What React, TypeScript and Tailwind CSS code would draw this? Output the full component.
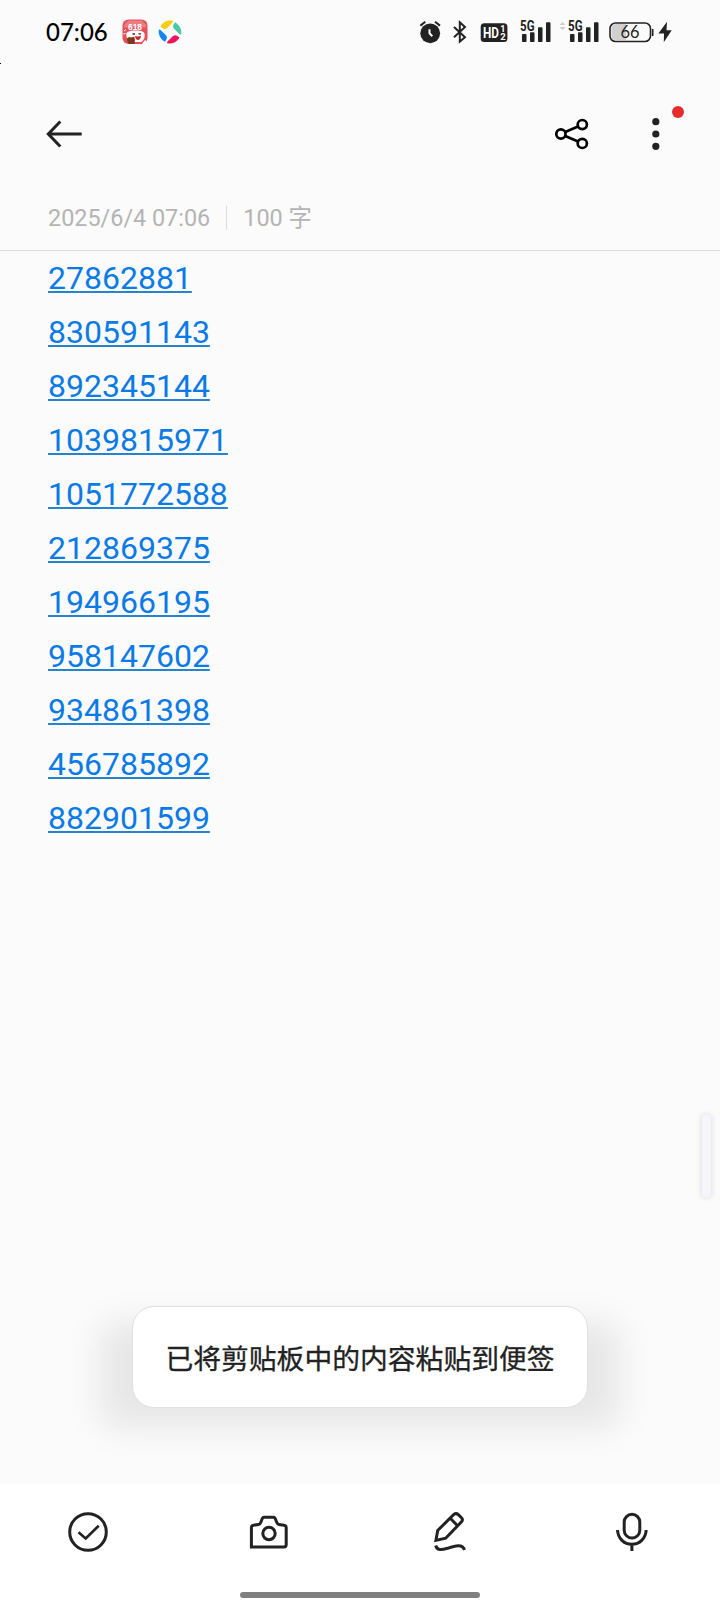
import type { ReactNode } from 'react';

interface NoteMeta {
  date: string;
  count: string;
}

const meta: NoteMeta = { date: '2025/6/4 07:06', count: '100 字' };

const numbers: string[] = [
  '27862881',
  '830591143',
  '892345144',
  '1039815971',
  '1051772588',
  '212869375',
  '194966195',
  '958147602',
  '934861398',
  '456785892',
  '882901599',
];

function SaleAppIcon() {
  return (
    <svg className="ml-[14px] w-[26px] h-[26px]" viewBox="0 0 26 26">
      <rect x="0.5" y="0.5" width="25" height="24.5" rx="6" fill="#e5505a" />
      <path d="M6 1.500h14l4 4v3H2V6z" fill="#ef7c80" />
      <text x="6" y="11" fontSize="9.5" fontWeight="700" fill="#fff" fontFamily="Liberation Sans, sans-serif" textLength="14" lengthAdjust="spacingAndGlyphs">618</text>
      <path d="M4.500 14c2-2 5-2.500 9-2.500s8 .5 9 3c.8 3-.5 6.500-3 8.500H9c-3-2-5.500-5-4.500-9z" fill="#fff" />
      <path d="M10.500 15h2.500M16.500 14.800h2.500" stroke="#4a2020" strokeWidth="1.300" />
      <path d="M13 17c2 .6 4 .6 6-.3-.2 3-1.500 4.300-3 4.300s-2.800-1.500-3-4z" fill="#c92a35" />
      <path d="M5 19.500l2-1.500 2.500.5 2.500-1 1 3-.5 4.500H7c-1.500-1-2-3.500-2-5.500z" fill="#7a3a1c" />
      <path d="M20 25l3-4 1.500 1-1 3z" fill="#fff" />
      <path d="M2 12l2-1.500M1.500 15l2-.5" stroke="#fff" />
    </svg>
  );
}

function PinwheelIcon() {
  return (
    <svg className="ml-[10px] w-[24px] h-[24px]" viewBox="0 0 24 24">
      <path d="M2.500 6.500A11.500 11.500 0 0 1 14.500.8Q15.500 1.500 14.500 2.500L9 8.300Q7 9.800 5 8.500z" fill="#f8cd12" />
      <path d="M17 2.200A11.500 11.500 0 0 1 23.200 14.300Q22.500 15 21.500 14L16 8.800Q14.500 7 15.500 4.800z" fill="#4cc8a3" />
      <path d="M21.500 17.500A11.500 11.500 0 0 1 9.500 23.200Q8.500 22.500 9.500 21.500L15 16Q17 14.500 19 15.800z" fill="#f0145f" />
      <path d="M7 21.800A11.500 11.500 0 0 1 .8 9.700Q1.500 9 2.500 10L8 15.200Q9.500 17 8.500 19.300z" fill="#1485f5" />
    </svg>
  );
}

function SignalBars() {
  return (
    <>
      <text x="1" y="11" fontSize="14.500" fontWeight="700" fill="#222" fontFamily="Roboto, sans-serif" textLength="14.500" lengthAdjust="spacingAndGlyphs">5G</text>
      <rect x="3" y="14" width="4.500" height="8" rx="0.8" fill="#222" />
      <rect x="11" y="12.300" width="4.500" height="9.700" rx="0.8" fill="#222" />
      <rect x="19" y="7.300" width="4.500" height="14.700" rx="0.8" fill="#222" />
      <rect x="27" y="2.200" width="4.500" height="19.800" rx="0.8" fill="#222" />
    </>
  );
}

function StatusBar() {
  return (
    <div className="relative h-16 pl-[46px] pr-12 flex items-center shrink-0">
      <span className="font-['Lato',sans-serif] font-medium text-2xl leading-8 text-black w-[62px] whitespace-nowrap">07:06</span>
      <SaleAppIcon />
      <PinwheelIcon />

      <svg className="ml-auto w-6 h-6" viewBox="0 0 24 24">
        <circle cx="12.200" cy="13.300" r="9.900" fill="#222" />
        <path d="M2.400 5.600L7.300 1.800M17 1.800L22 5.600" stroke="#222" strokeWidth="2" />
        <path d="M11.500 9.300V13.300L14.300 16.300" stroke="#fbfbfb" strokeWidth="2" fill="none" />
      </svg>
      <svg className="ml-[10px] w-4 h-6" viewBox="0 0 16 24">
        <path d="M2 7L13 17.200L7.800 21.600V2.300L13 7L2 17.200" fill="none" stroke="#222" strokeWidth="2" />
      </svg>
      <svg className="ml-3 w-7 h-6" viewBox="0 0 28 24">
        <rect x="0.700" y="3.200" width="26.700" height="18.800" rx="3.500" fill="#222" />
        <text x="3" y="18" fontSize="15" fontWeight="700" fill="#fff" fontFamily="Roboto, sans-serif" textLength="16" lengthAdjust="spacingAndGlyphs">HD</text>
        <text x="20.300" y="12" fontSize="9" fontWeight="700" fill="#fff" fontFamily="Roboto, sans-serif">1</text>
        <text x="20.300" y="20.300" fontSize="9.500" fontWeight="700" fill="#fff" fontFamily="Roboto, sans-serif">2</text>
      </svg>
      <svg className="ml-[11px] w-8 h-8" viewBox="0 -4 32 32">
        <SignalBars />
      </svg>
      <svg className="ml-2 w-10 h-8" viewBox="-8 -4 40 32">
        <path d="M-7.500 5l3-3L-1.500 5zM-7.500 7l3 3L-1.500 7z" fill="#ccc" />
        <SignalBars />
      </svg>
      <svg className="ml-[9px] w-[46px] h-6" viewBox="0 0 46 24">
        <path d="M8 4H18V20H8Q3.500 20 3.500 15.500V8.500Q3.500 4 8 4z" fill="#d0d0d0" />
        <rect x="2" y="3" width="40.500" height="18.500" rx="5.500" fill="none" stroke="#222" strokeWidth="1.600" />
        <path d="M44.700 9v7" stroke="#222" strokeWidth="1.600" />
        <text x="12.500" y="18" fontSize="16.500" fill="#222" fontFamily="Lato, sans-serif" textLength="19" lengthAdjust="spacingAndGlyphs">66</text>
      </svg>
      <svg className="ml-1 w-[14px] h-6" viewBox="0 0 14 24">
        <path d="M9 1.800L.4 13.500H6L5.800 22.300L13.700 10.300H8.500z" fill="#222" />
      </svg>

      <span className="absolute left-0 bottom-0 w-px h-px bg-black" />
    </div>
  );
}

function Header() {
  return (
    <header className="h-[140px] pl-[45px] pr-[38px] flex items-center justify-between">
      <button className="w-[38px] h-[30px]">
        <svg className="w-full h-full" viewBox="0 0 38 30" fill="none" stroke="#222" strokeWidth="3">
          <path d="M3 15H36.700" />
          <path d="M15.300 2.500L3.300 15L15.300 27.500" />
        </svg>
      </button>
      <div className="flex items-center gap-14">
        <button className="w-9 h-9">
          <svg className="w-full h-full" viewBox="0 0 36 36" fill="none" stroke="#000" strokeWidth="2.700">
            <circle cx="6.900" cy="18" r="4.600" />
            <circle cx="28.300" cy="8.600" r="4.600" />
            <circle cx="28.300" cy="27.400" r="4.600" />
            <path d="M11.200 16L24 10.600M11.200 20L24 25.400" />
          </svg>
        </button>
        <button className="relative w-9 h-9">
          <svg className="w-full h-full" viewBox="0 0 36 36" fill="#222">
            <circle cx="9.800" cy="5.700" r="3.600" />
            <circle cx="9.800" cy="18" r="3.600" />
            <circle cx="9.800" cy="30.300" r="3.600" />
          </svg>
          <span className="absolute left-[26px] -top-[10px] w-3 h-3 rounded-full bg-[#e52b2b]" />
        </button>
      </div>
    </header>
  );
}

function ToolButton({ children }: { children: ReactNode }) {
  return (
    <button className="w-11 h-11">
      <svg className="w-full h-full" viewBox="0 0 44 44" fill="none" stroke="#222" strokeWidth="3">
        {children}
      </svg>
    </button>
  );
}

function BottomBar() {
  return (
    <footer className="bg-white h-[128px] flex flex-col items-center">
      <div className="w-full px-[66px] pt-[26px] flex justify-between">
        <ToolButton>
          <circle cx="22" cy="22" r="18.300" />
          <path d="M12.500 22.300L19.700 28.500L32.700 15.800" strokeWidth="2.600" />
        </ToolButton>
        <ToolButton>
          <path d="M4.400 37V17.500Q4.400 15.500 6.500 15.200L11.500 14.500Q13 14.300 13.700 12.500L15.300 8.500Q15.800 7.300 17 7.300H26.500Q27.700 7.300 28.200 8.500L29.800 12.500Q30.500 14.300 32 14.500L37 15.200Q39.200 15.500 39.200 17.500V34.500Q39.200 37 37 37z" />
          <circle cx="22" cy="23.500" r="6.200" />
        </ToolButton>
        <ToolButton>
          <path d="M6.900 30.400L8.700 20.500L24.800 4.400Q27.200 2.700 29.300 4.600L32.500 7.800Q34.300 9.700 32.500 11.800L16.700 28.200z" />
          <path d="M21.500 8.500L28.300 15.500" />
          <path d="M6.700 35.500C8 40.500 12 40.300 18.500 38.300C26 35.800 33.500 33.500 35.500 40" />
        </ToolButton>
        <ToolButton>
          <rect x="14.200" y="4.300" width="15.600" height="23.700" rx="7.800" />
          <path d="M7.500 20C8 28.500 14 34.300 21.800 34.300S35.700 28.500 36.200 20M21.900 34.300V41" />
        </ToolButton>
      </div>
      <div className="mt-[38px] w-60 h-1.5 rounded-full bg-[#808080]" />
    </footer>
  );
}

export default function App() {
  return (
    <div className="relative w-[720px] h-[1612px] bg-[#fbfbfb] flex flex-col overflow-hidden font-['Roboto','Noto_Sans_CJK_SC',sans-serif]">
      <StatusBar />
      <Header />

      {/* Date and character count */}
      <div className="h-[47px] px-12 pb-[18px] flex items-center text-[23.400px] leading-7 text-[#b4b4b4] border-b border-[#dcdcdc]">
        <span>{meta.date}</span>
        <span className="mx-4 w-px h-6 bg-[#dcdcdc]" />
        <span>{meta.count}</span>
      </div>

      {/* Note body */}
      <main className="flex-1 min-h-0 px-12 flex flex-col items-start">
        {numbers.map((n) => (
          <a
            key={n}
            href={`tel:${n}`}
            className="text-[32px] leading-[54px] text-[#0a7ae6] underline decoration-[#2583d0] decoration-2 underline-offset-2 [text-decoration-skip-ink:none]"
          >
            {n}
          </a>
        ))}
      </main>

      <BottomBar />

      {/* Edge panel handle */}
      <div className="absolute right-[9px] top-[1115px] w-[9px] h-[82px] rounded-[4px] bg-[#f5f5fb] shadow-[0_0_5px_2px_rgba(0,0,0,0.08)]" />

      {/* Toast, its shadow is wider than the box and sits lower */}
      <div className="absolute left-1/2 -translate-x-1/2 bottom-[204px] w-[456px] h-[102px]">
        <div className="absolute -inset-x-[32px] top-[16px] -bottom-[20px] rounded-[16px] bg-black/8 blur-[16px]" />
        <div className="relative w-full h-full pt-[5px] rounded-[22px] border border-[#e0e0e0] bg-white flex items-center justify-center text-[27.800px] text-[#222] whitespace-nowrap [-webkit-text-stroke:0.3px_#222]">
          已将剪贴板中的内容粘贴到便签
        </div>
      </div>
    </div>
  );
}
